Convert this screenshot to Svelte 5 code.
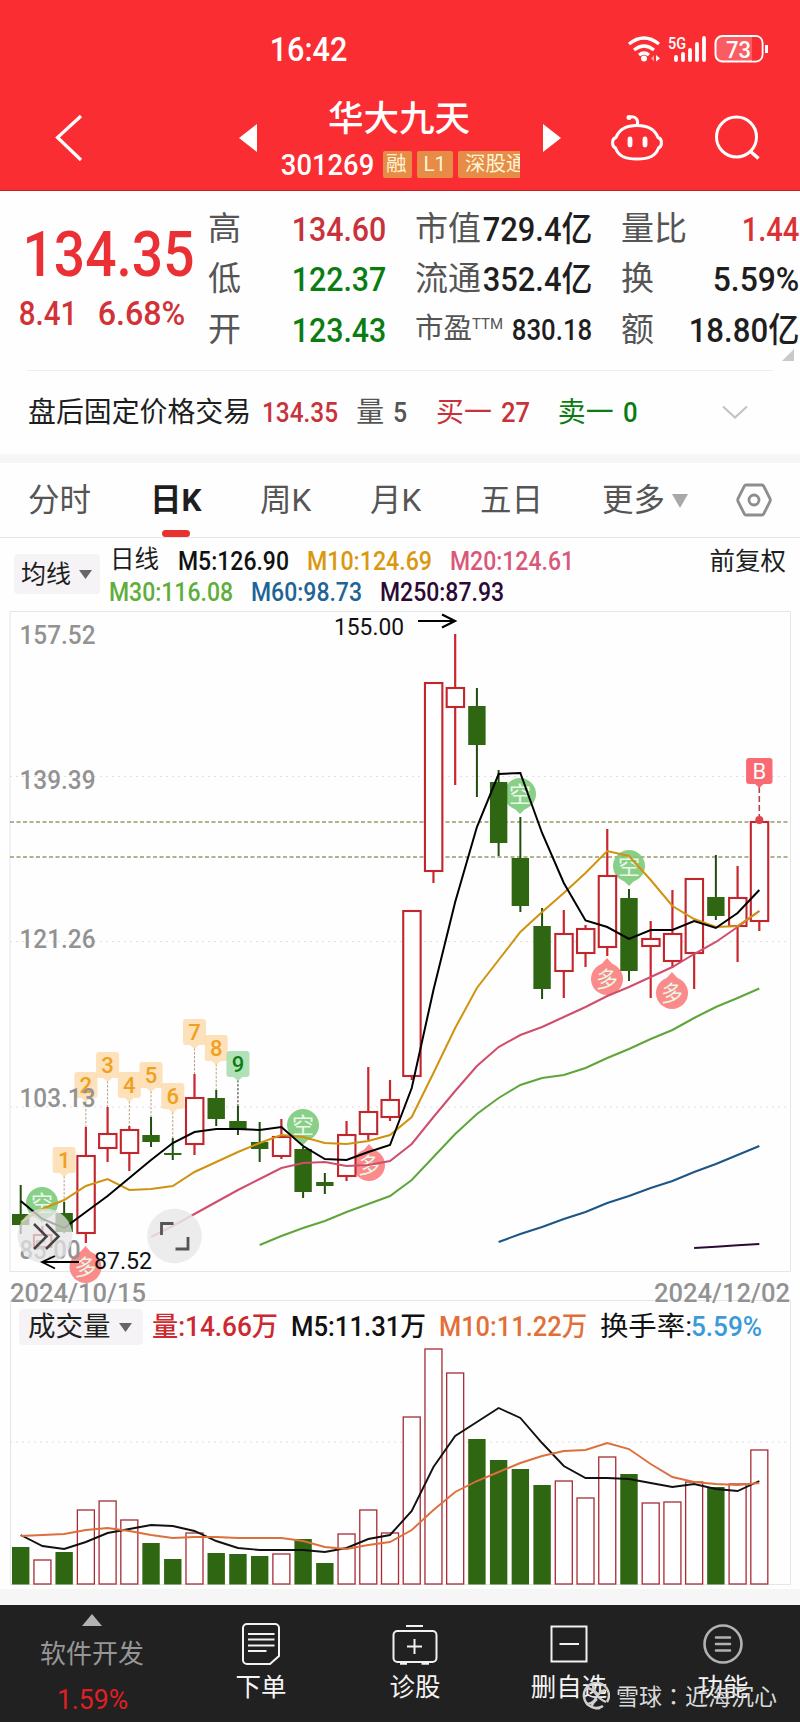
<script lang="ts">
	const RED = '#c8323a';
	const GREEN = '#0a7d12';
	const INK = '#1e1e1e';

	const quotes = [
		[['高', '134.60', RED, 92], ['市值', '729.4亿', INK, 107], ['量比', '1.44', '#dc3037', 55]],
		[['低', '122.37', GREEN, 92], ['流通', '352.4亿', INK, 107], ['换', '5.59%', INK, 84]],
		[['开', '123.43', GREEN, 92], ['市盈', '830.18', INK, 78], ['额', '18.80亿', INK, 108]],
	];

	const tabs = ['分时', '日K', '周K', '月K', '五日', '更多'];
	let active = $state('日K');

	const averages = [
		[['M5:126.90', 109, '#111'], ['M10:124.69', 123, '#d9980f'], ['M20:124.61', 122, '#d9587a']],
		[['M30:116.08', 122, '#5fae3c'], ['M60:98.73', 109, '#1f6496'], ['M250:87.93', 122, '#2b0a35']],
	];

	const step = 21.724;
	const cx = (i) => 20.7 + i * step;

	// [up, body top, body bottom, wick top, wick bottom, volume top]
	const candles = [
		[0, 1214, 1225, 1185, 1234, 1547],
		[1, 1235, 1247, 1226, 1250, 1560],
		[0, 1213, 1232, 1202, 1233, 1552],
		[1, 1156, 1233, 1127, 1243, 1510],
		[1, 1134, 1148, 1107, 1162, 1501],
		[1, 1130, 1153, 1126, 1171, 1520],
		[0, 1135, 1142, 1117, 1147, 1543],
		[0, 1153, 1155, 1138, 1160, 1559],
		[1, 1098, 1144, 1074, 1155, 1533],
		[0, 1098, 1119, 1090, 1126, 1553],
		[0, 1121, 1130, 1106, 1135, 1554],
		[0, 1142, 1149, 1122, 1162, 1556],
		[1, 1137, 1156, 1119, 1159, 1554],
		[0, 1149, 1192, 1147, 1198, 1539],
		[0, 1182, 1186, 1173, 1194, 1563],
		[1, 1135, 1176, 1121, 1181, 1534],
		[1, 1112, 1134, 1067, 1140, 1510],
		[1, 1100, 1117, 1080, 1121, 1533],
		[1, 911, 1076, 911, 1080, 1417],
		[1, 683, 871, 683, 883, 1349],
		[1, 688, 707, 634, 785, 1373],
		[0, 706, 745, 688, 797, 1439],
		[0, 782, 843, 770, 856, 1460],
		[0, 858, 906, 817, 912, 1469],
		[0, 926, 989, 908, 999, 1485],
		[1, 934, 971, 910, 998, 1481],
		[1, 929, 953, 925, 967, 1498],
		[1, 876, 947, 829, 956, 1457],
		[0, 898, 971, 889, 981, 1474],
		[1, 939, 946, 921, 998, 1503],
		[1, 934, 961, 890, 968, 1502],
		[1, 879, 953, 879, 989, 1482],
		[0, 897, 916, 855, 920, 1487],
		[1, 898, 926, 866, 962, 1484],
		[1, 822, 921, 822, 931, 1450],
	];

	const priceLines = [
		{ color: '#5fa53a', from: 11, ys: [1245, 1236, 1228, 1221, 1212, 1204, 1196, 1180, 1157, 1134, 1114, 1098, 1085, 1078, 1075, 1068, 1058, 1049, 1039, 1030, 1018, 1007, 998, 988.5] },
		{ color: '#1c5586', from: 22, ys: [1242, 1234, 1227, 1219, 1212, 1203, 1196, 1188, 1181, 1172, 1164, 1155, 1146] },
		{ color: '#2b0a35', from: 31, ys: [1248, 1246.7, 1245.3, 1244] },
		{ color: '#d04d6b', from: 6, ys: [1237, 1226, 1214, 1202, 1190, 1179, 1168, 1163, 1162, 1166, 1165, 1161, 1144, 1117, 1091, 1066, 1047, 1035, 1027, 1017, 1007, 996, 987, 977, 967, 954, 942, 927, 911] },
		{ color: '#cf930f', from: 0, ys: [1222, 1209, 1200, 1186, 1179, 1190, 1189, 1186, 1172, 1162, 1152, 1143, 1135, 1137, 1143, 1144, 1141, 1135, 1117, 1073, 1028, 988, 960, 932, 912, 893, 873, 851, 856, 880, 906, 919, 927, 926, 911] },
		{ color: '#000', from: 0, ys: [1201, 1219, 1228, 1212, 1196, 1178, 1160, 1143, 1132, 1129, 1129, 1130, 1127, 1146, 1159, 1160, 1152, 1145, 1088, 990, 902, 827, 774, 773, 833, 883, 920.5, 927, 939, 930, 930, 921, 928, 913, 890] },
	];

	const volumeLines = [
		{ color: '#111', from: 0, ys: [1535, 1546, 1549, 1542, 1533, 1529, 1525, 1526, 1531, 1541, 1548, 1550, 1550, 1550, 1552, 1548, 1539, 1535, 1511, 1467, 1436, 1422, 1408, 1418, 1443, 1466, 1478, 1478, 1479, 1483, 1487, 1484, 1489, 1491, 1481] },
		{ color: '#dd6f3c', from: 0, ys: [1536, 1535, 1534, 1530, 1528, 1531, 1535, 1538, 1537, 1537, 1538, 1538, 1538, 1541, 1547, 1549, 1545, 1542, 1530, 1510, 1492, 1481, 1472, 1463, 1456, 1451, 1450, 1443, 1449, 1464, 1477, 1482, 1484, 1485, 1483] },
	];

	const points = (line) => line.ys.map((y, i) => `${cx(line.from + i)},${y}`).join(' ');

	const flags = [1147, 1072, 1052, 1072, 1062, 1083, 1019, 1035, 1051];
	const shorts = [[42, 1203], [303, 1125], [520, 794], [629, 866]];
	const longs = [[85.5, 1267], [369, 1165], [607, 979], [672, 993]];
	const scale = [['157.52', 644], ['139.39', 789], ['121.26', 948], ['103.13', 1107], ['85.00', 1259]];
</script>

<!-- numerals squeezed to a fixed width; cap is the digit height -->
{#snippet fit(text, w, cap, color = 'currentColor', weight = 500)}
	{@const size = cap / 0.711}
	<svg class="fit" width={w} height={cap}>
		<text x={-size * 0.04} y={cap} font-size={size} font-weight={weight} fill={color} textLength={w + size * 0.08} lengthAdjust="spacingAndGlyphs">{text}</text>
	</svg>
{/snippet}

{#snippet label(text, x, y, w, cap, color, weight = 400)}
	<text {x} {y} font-size={cap / 0.711} font-weight={weight} fill={color} textLength={w} lengthAdjust="spacingAndGlyphs">{text}</text>
{/snippet}

<div class="app">
	<header>
		<div class="status">
			{@render fit('16:42', 75, 23)}
			<svg class="signals" width="142" height="30" viewBox="627 34 142 30" fill="none" stroke="#fff">
				<path d="M629 44q15 -12 30 0M634 50q10 -8 20 0M639 55q5 -4 10 0" stroke-width="3.2" />
				<circle cx="644" cy="58.5" r="3" fill="#fff" stroke="none" />
				<path d="M654 55l-3 3.5 3 3z" fill="#fff" stroke="none" opacity="0.5" />
				<path d="M656 55l4 3.5 -4 3z" fill="#fff" stroke="none" />
				<text x="668" y="48.5" font-size="16" font-weight="500" fill="#fff" stroke="none" textLength="18" lengthAdjust="spacingAndGlyphs">5G</text>
				<path d="M676 57v3M683 54v6M690 50v10M697 44v16M704 38v22" stroke-width="3.8" stroke-linecap="round" />
				<rect x="715.5" y="36" width="47" height="25.5" rx="7" stroke-width="2" fill="#fb5c62" />
				<path d="M752 37h4.500a5.500 5.500 0 0 1 5 5.500v12.500a5.500 5.500 0 0 1 -5 5.500h-4.500z" fill="#fa2d33" stroke="none" />
				<path d="M766.5 45v8" stroke-width="3" />
				<text x="726" y="57.5" font-size="24" font-weight="500" fill="#fff" stroke="none" textLength="25" lengthAdjust="spacingAndGlyphs">73</text>
			</svg>
		</div>
		<div class="titlebar">
			<svg width="30" height="50" viewBox="54 113 30 50" fill="none" stroke="#fff" stroke-width="3.2"><path d="M81 116L57.5 137.5L81 160" /></svg>
			<svg class="prev" width="18" height="28"><path d="M0 14L18 0V28z" fill="#fff" /></svg>
			<div class="stock">
				<h1>华大九天</h1>
				<div class="code">
					{@render fit('301269', 91, 21)}
					<div class="badges">
						<span>融</span>
						<span class="l1">L1</span>
						<span>深股通</span>
					</div>
				</div>
			</div>
			<svg class="next" width="18" height="28"><path d="M18 14L0 0V28z" fill="#fff" /></svg>
			<svg class="robot" width="54" height="50" viewBox="610 114 54 50" fill="none" stroke="#fff" stroke-width="3">
				<path d="M637 127c2 -6 -1 -10 -7 -9" />
				<circle cx="629" cy="118.5" r="2.5" fill="#fff" stroke="none" />
				<path d="M637 126.500c11 0 18 4 21 12c4.500 1 4.500 9 0.500 10.500c-3 8 -9 11 -21.500 11s-18.500 -3 -21.500 -11c-4 -1.500 -4 -9.500 0.500 -10.500c3 -8 10 -12 21 -12z" />
				<path d="M630 140v6M645 140v6" stroke-width="4.8" stroke-linecap="round" />
			</svg>
			<svg class="search" width="48" height="48" viewBox="713 115 48 48" fill="none" stroke="#fff" stroke-width="3">
				<circle cx="736.5" cy="138" r="20" />
				<path d="M750 152l8.5 7.5" stroke-width="3.5" />
			</svg>
		</div>
	</header>

	<section class="quote">
		<div class="now">
			<div class="price">{@render fit('134.35', 167, 45, '#ea3035')}</div>
			<div class="change">
				{@render fit('8.41', 56, 24, '#d03238')}
				{@render fit('6.68%', 85, 24, '#d03238')}
			</div>
		</div>
		<div class="grid">
			{#each quotes as row}
				{#each row as [name, value, color, w]}
					<div class="cell">
						<span class:small={name === '市盈'}>{name}{#if name === '市盈'}<sup>TTM</sup>{/if}</span>
						{@render fit(value, w, name === '市盈' ? 21 : 24, color)}
					</div>
				{/each}
			{/each}
		</div>
		<svg class="corner" width="12" height="12"><path d="M12 0V12H0z" fill="#c9c9c9" /></svg>
	</section>

	<section class="after">
		<span class="ink">盘后固定价格交易</span>
		{@render fit('134.35', 74, 19, RED)}
		<span class="vol">量</span>
		{@render fit('5', 12, 19, '#555')}
		<span class="buy">买一</span>
		{@render fit('27', 27, 19, RED)}
		<span class="sell">卖一</span>
		{@render fit('0', 12.5, 19, GREEN)}
		<svg class="more" width="26" height="15" fill="none" stroke="#c4c4c4" stroke-width="2.2"><path d="M1 1.5L13 12.5L25 1.5" /></svg>
	</section>

	<nav class="tabs">
		{#each tabs as tab}
			<button class:active={tab === active} onclick={() => (active = tab)}>
				{tab}
				{#if tab === '更多'}
					<svg width="16" height="14"><path d="M0 0H16L8 14z" fill="#a9a9a9" /></svg>
				{/if}
			</button>
		{/each}
		<svg class="hex" width="36" height="34" fill="none" stroke="#8d8d8d" stroke-width="2.8">
			<path d="M10 2H26Q27 2 27.6 3L34 15.5Q34.6 17 34 18.5L27.6 31Q27 32 26 32H10Q9 32 8.4 31L2 18.5Q1.4 17 2 15.5L8.4 3Q9 2 10 2z" />
			<circle cx="18" cy="17" r="5" />
		</svg>
	</nav>

	<section class="ma">
		<div class="select">均线<svg width="13" height="9"><path d="M0 0H13L6.5 9z" fill="#666" /></svg></div>
		<div class="values">
			{#each averages as row, r}
				<div class="line">
					{#if r === 0}<span class="kind">日线</span>{/if}
					{#each row as [text, w, color]}
						{@render fit(text, w, 18, color)}
					{/each}
				</div>
			{/each}
		</div>
		<span class="adjust">前复权</span>
	</section>

	<svg class="chart" width="800" height="698" viewBox="0 606 800 698">
		<g fill="none" stroke="#e6e6ea">
			<path d="M10 611.5H790.5V1271.5H10z M10 1300.5H790M10.5 1300V1304M790.5 1300V1304" />
			<path d="M10 776.5H790M10 941.5H790M10 1107H790" stroke="#dfdfe4" stroke-dasharray="2 4" />
		</g>
		<path d="M10 822H790M10 857H790" stroke="#999969" stroke-width="1.3" stroke-dasharray="4 2.5" />

		{#each shorts as [x, y]}
			<g opacity="0.9">
				<path d="M{x - 8} {y + 12}L{x} {y + 20}L{x + 8} {y + 12}z" fill="#7cca7c" />
				<circle cx={x} cy={y} r="16" fill="#7cca7c" />
				<text class="mark" {x} y={y + 8}>空</text>
			</g>
		{/each}
		{#each longs as [x, y]}
			<path d="M{x - 8} {y - 12}L{x} {y - 21}L{x + 8} {y - 12}z" fill="#fb8a8a" />
			<circle cx={x} cy={y} r="16" fill="#fb8a8a" />
			<text class="mark" {x} y={y + 8}>多</text>
		{/each}

		{#each flags as y, i}
			{@const x = cx(i + 2)}
			<path d="M{x} {y + 29}V{candles[i + 2][3]}" stroke={i === 8 ? '#333' : '#b7a27e'} stroke-dasharray="2.5 1.5" />
			<path
				d="M{x - 8.5} {y}h17a3 3 0 0 1 3 3v20a3 3 0 0 1 -3 3h-4l-4.5 4l-4.5 -4h-4a3 3 0 0 1 -3 -3v-20a3 3 0 0 1 3 -3z"
				fill={i === 8 ? '#a4dcab' : '#fcdcae'}
				opacity="0.85"
			/>
			<text class="num" {x} y={y + 20.5} fill={i === 8 ? GREEN : '#f0a01c'}>{i + 1}</text>
		{/each}

		{#each candles as [up, top, bottom, high, low], i}
			{@const x = cx(i)}
			{#if up}
				<path d="M{x} {high}V{top}M{x} {bottom}V{low}" stroke="#c9272e" stroke-width="2.2" />
				<rect x={x - 8.5} y={top} width="17.4" height={bottom - top} fill={i === 1 ? 'none' : '#fff'} stroke="#c2262d" stroke-width="2.1" />
			{:else}
				<path d="M{x} {high}V{low}" stroke="#1f4d0d" stroke-width="2" />
				<rect x={x - 8.7} y={top} width="17.4" height={bottom - top} fill="#2f6611" />
			{/if}
		{/each}

		{#each priceLines as line}
			<polyline points={points(line)} fill="none" stroke={line.color} stroke-width="2" />
		{/each}

		{#each scale as [text, y]}
			{@render label(text, 19.5, y, text.length === 5 ? 61 : 76, 18.5, '#929292', 500)}
		{/each}

		<circle cx="45" cy="1236" r="27.5" fill="#e4e4e4" opacity="0.75" />
		<path d="M34 1224L46.5 1236.5L34 1249M46 1224L58.5 1236.5L46 1249" fill="none" stroke="#444" stroke-width="2.5" />
		<circle cx="174.5" cy="1236" r="27.3" fill="#e9e9e9" opacity="0.85" />
		<path d="M161.5 1235V1223.5H173.5M188 1237V1249H175.5" fill="none" stroke="#555" stroke-width="2.8" />

		{@render label('155.00', 334, 634.5, 70, 17.5, '#111')}
		<path d="M418 621H455M442 614.5L455 621L442 627.5" fill="none" stroke="#000" stroke-width="2.2" />
		{@render label('87.52', 94, 1269, 58, 17.5, '#111')}
		<path d="M79 1262H42M55 1256L42 1262L55 1268.5" fill="none" stroke="#000" stroke-width="1.8" />

		<path d="M759.3 787V816" stroke="#b3404a" stroke-width="1.6" stroke-dasharray="6 3" />
		<path d="M749 758h20.500a3 3 0 0 1 3 3v20a3 3 0 0 1 -3 3h-6l-4.200 4l-4.200 -4h-6a3 3 0 0 1 -3 -3v-20a3 3 0 0 1 3 -3z" fill="#f96a72" />
		<text class="b" x="759.3" y="778.5">B</text>
		<circle cx="759.3" cy="820" r="4" fill="#e2404a" />

		{@render label('2024/10/15', 10, 1301.5, 136, 18.5, '#929292', 500)}
		{@render label('2024/12/02', 654, 1301.5, 136, 18.5, '#929292', 500)}
	</svg>

	<section class="volume">
		<div class="volhead">
			<div class="select">成交量<svg width="13" height="9"><path d="M0 0H13L6.5 9z" fill="#666" /></svg></div>
			{@render fit('量:14.66万', 124, 19, '#cc2a31')}
			{@render fit('M5:11.31万', 133, 19, '#111')}
			{@render fit('M10:11.22万', 146, 19, '#e26f3a')}
			<span class="rate">{@render fit('换手率:', 90, 19, '#111', 400)}{@render fit('5.59%', 69, 19, '#3a9bd8')}</span>
		</div>
		<svg width="780" height="240" viewBox="10 1345 780 240">
			<path d="M10 1442H790" stroke="#dcdfe2" stroke-dasharray="2 4" />
			{#each candles as [up, , , , , top], i}
				{#if up}
					<rect x={cx(i) - 8.5} y={top} width="17" height={1584 - top} fill="#fff" stroke="#a72b36" stroke-width="1.3" />
				{:else}
					<rect x={cx(i) - 8.7} y={top} width="17.4" height={1584.5 - top} fill="#2f6611" />
				{/if}
			{/each}
			{#each volumeLines as line}
				<polyline points={points(line)} fill="none" stroke={line.color} stroke-width="1.9" />
			{/each}
		</svg>
	</section>

	<footer>
		<div class="item sector">
			<svg width="20" height="12"><path d="M0 12L10 0L20 12z" fill="#b3b3b3" /></svg>
			<span>软件开发</span>
			{@render fit('1.59%', 69, 19, '#e01f24', 400)}
		</div>
		<div class="item">
			<svg width="46" height="44" viewBox="238 1622 46 44" fill="none" stroke="#f2f2f2" stroke-width="2">
				<path d="M247 1624H275a4 4 0 0 1 4 4V1656L270 1664H247a4 4 0 0 1 -4 -4V1628a4 4 0 0 1 4 -4z" />
				<path d="M248 1634H274.5M248 1639.5H274.5M248 1645.5H274.5M248 1651H266.5" />
			</svg>
			<span>下单</span>
		</div>
		<div class="item">
			<svg width="46" height="44" viewBox="392 1622 46 44" fill="none" stroke="#f2f2f2" stroke-width="2">
				<rect x="393.5" y="1631" width="43" height="31" rx="4" />
				<path d="M406 1626H423M414.5 1639V1654M407 1646.5H422" />
				<path d="M400 1663.5H407M421.5 1663.5H429" stroke-width="2.5" />
			</svg>
			<span>诊股</span>
		</div>
		<div class="item">
			<svg width="46" height="44" viewBox="545.5 1622 46 44" fill="none" stroke="#f2f2f2" stroke-width="2">
				<rect x="551" y="1626.5" width="35" height="35" />
				<path d="M559 1644H578.5" />
			</svg>
			<span>删自选</span>
		</div>
		<div class="item">
			<svg width="46" height="44" viewBox="699.5 1622 46 44" fill="none" stroke="#b2b2b2" stroke-width="2.6">
				<circle cx="722.5" cy="1644" r="18.5" />
				<path d="M715.5 1637.5H729.5M715.5 1644H729.5M715.5 1650.5H729.5" stroke-linecap="round" />
			</svg>
			<span>功能</span>
		</div>
		<div class="watermark">
			<svg width="28" height="28" fill="none" stroke="#d0d0d0" stroke-width="2.4">
				<path d="M21 24a12.500 12.500 0 1 1 4 -4M18 26a12.500 12.500 0 0 1 -6 0" />
				<path d="M5 6q6 1 9 6t10 8M4 22q7 0 10 -6t9 -8M11 3q0 6 5 9M9 25q2 -5 6 -8" />
			</svg>
			<span>雪球<i>：</i>近海沉心</span>
		</div>
	</footer>
</div>

<style>
	:global(body) {
		background: #fff;
	}

	.app {
		width: 800px;
		height: 1722px;
		overflow: hidden;
		background: #fefefe;
		color: #1e1e1e;
		font-family: Roboto, 'Noto Sans CJK SC', sans-serif;
		line-height: 1;
	}

	svg {
		display: block;
		flex: none;
	}

	.fit {
		overflow: visible;
	}

	header {
		box-sizing: border-box;
		height: 191px;
		background: #fa2d33;
		border-bottom: 1px solid #c02228;
		color: #fff;
	}

	.status {
		display: flex;
		justify-content: space-between;
		align-items: center;
		height: 98px;
		padding: 0 31px 0 271px;
	}

	.titlebar {
		display: flex;
		align-items: center;
		height: 80px;
		padding-left: 54px;
	}

	.prev {
		margin-left: 155px;
	}

	.stock {
		width: 238px;
		margin: 4px 23px 0 25px;
	}

	h1 {
		margin: 0 0 13px 46px;
		font-size: 35.5px;
		font-weight: 500;
	}

	.code {
		display: flex;
		align-items: center;
		gap: 10px;
	}

	.badges {
		display: flex;
		gap: 5px;
		width: 137px;
		overflow: hidden;
		font-size: 20.5px;
		line-height: 27px;
		color: #fff4d6;
		white-space: nowrap;
	}

	.badges span {
		flex: none;
		padding: 0 5px 0 7px;
		border-radius: 2px;
		background: #e68c46;
	}

	.badges span:first-child {
		padding: 0 5px 0 3px;
	}

	.badges .l1 {
		padding: 0 7px;
	}

	.robot {
		margin-left: 49px;
	}

	.search {
		margin-left: 49px;
	}

	.quote {
		display: flex;
		position: relative;
		height: 166px;
		margin: 0 27px;
		padding-top: 13px;
		border-bottom: 1px solid #eee;
	}

	.now {
		width: 181px;
		flex: none;
	}

	.price {
		margin: 27px 0 25px -2px;
	}

	.change {
		display: flex;
		gap: 23px;
		margin-left: -7px;
	}

	.grid {
		display: grid;
		grid-template-columns: 177px 176px 177px;
		grid-auto-rows: 50.3px;
		column-gap: 30px;
		flex: none;
	}

	.cell {
		display: flex;
		justify-content: space-between;
		align-items: center;
		font-size: 33px;
		color: #555;
	}

	.cell span {
		display: flex;
		margin-top: -1px;
	}

	.cell .small {
		font-size: 28.5px;
	}

	sup {
		margin-top: 2px;
		font-size: 15px;
		line-height: 1;
	}

	.corner {
		position: absolute;
		right: -21px;
		bottom: 9px;
	}

	.after {
		display: flex;
		align-items: center;
		height: 83px;
		padding-left: 28px;
		border-bottom: 9px solid #f6f6f7;
		font-size: 27.9px;
		color: #555;
	}

	.after span {
		margin-top: 1px;
	}

	.after .ink {
		margin-right: 12px;
		color: #1e1e1e;
	}

	.after .vol {
		margin: 1px 10px 0 19px;
	}

	.after .buy {
		margin: 1px 10px 0 30px;
		color: #c8323a;
	}

	.after .sell {
		margin: 1px 10px 0 29px;
		color: #0a7d12;
	}

	.more {
		margin-left: 86px;
	}

	.tabs {
		display: grid;
		grid-template-columns: 122px 110px 110px 110px 122px 134px auto;
		align-items: center;
		height: 74px;
		padding-left: 28px;
		border-bottom: 1px solid #e6e6ea;
	}

	.tabs button {
		display: flex;
		position: relative;
		align-items: center;
		gap: 7px;
		height: 74px;
		padding: 2px 0 0;
		border: none;
		background: none;
		font: 400 31.5px/1 Roboto, 'Noto Sans CJK SC', sans-serif;
		color: #555;
		justify-self: start;
	}

	.tabs .active {
		font-weight: 700;
		color: #1e1e1e;
	}

	.tabs .active::after {
		content: '';
		position: absolute;
		left: 12px;
		bottom: 0;
		width: 28px;
		height: 7px;
		border-radius: 4px;
		background: #e8322f;
	}

	.ma {
		display: flex;
		height: 68px;
		padding-left: 14px;
	}

	.select {
		display: flex;
		align-items: center;
		gap: 8px;
		box-sizing: border-box;
		border-radius: 4px;
		background: #f5f3f5;
		color: #1e1e1e;
	}

	.ma .select {
		width: 86px;
		height: 40px;
		margin-top: 16px;
		padding: 0 0 0 7px;
		font-size: 25px;
	}

	.values {
		margin: 6px 0 0 10px;
	}

	.line {
		display: flex;
		align-items: center;
		gap: 20px;
		height: 33px;
	}

	.line + .line {
		height: 30px;
	}

	.kind {
		font-size: 24.5px;
	}

	.adjust {
		margin: 11px 0 0 auto;
		padding-right: 14px;
		font-size: 25.5px;
	}

	.mark {
		font: 400 22px 'Noto Sans CJK SC', sans-serif;
		fill: #e9f8e6;
		text-anchor: middle;
	}

	.num {
		font: 500 22px Roboto, sans-serif;
		text-anchor: middle;
	}

	.b {
		font: 400 22px Roboto, sans-serif;
		fill: #fff;
		text-anchor: middle;
	}

	.volume {
		margin: 0 9px 0 10px;
		border: solid #e6e6ea;
		border-width: 0 1px 1px;
		box-sizing: border-box;
		width: 781px;
		height: 281px;
	}

	.volhead {
		display: flex;
		align-items: center;
		gap: 15px;
		height: 41px;
		padding: 4px 0 0 8px;
		box-sizing: border-box;
	}

	.volhead .select {
		width: 124px;
		height: 36px;
		margin-right: -5px;
		padding: 1px 0 0 9px;
		font-size: 27.5px;
	}

	.rate {
		display: flex;
		gap: 1px;
	}

	.volume > svg {
		margin-left: -1px;
	}

	footer {
		display: flex;
		position: relative;
		height: 117px;
		margin-top: 4px;
		border-top: 16px solid #f6f6f7;
		background: #212121;
		color: #f4f4f4;
	}

	.item {
		display: flex;
		flex-direction: column;
		align-items: center;
		width: 154px;
		padding-top: 17px;
		font-size: 25.5px;
	}

	.item span {
		margin-top: 9px;
	}

	.sector {
		width: 184px;
		padding-top: 9px;
		color: #969696;
		font-size: 26px;
	}

	.sector span {
		margin: 15px 0 23px;
	}

	.watermark {
		display: flex;
		align-items: center;
		gap: 6px;
		position: absolute;
		left: 582px;
		top: 77px;
		font-size: 23px;
		color: #d8d8d8;
		white-space: nowrap;
	}

	.watermark i {
		font-family: 'Noto Sans CJK TC', sans-serif;
		font-style: normal;
	}
</style>
